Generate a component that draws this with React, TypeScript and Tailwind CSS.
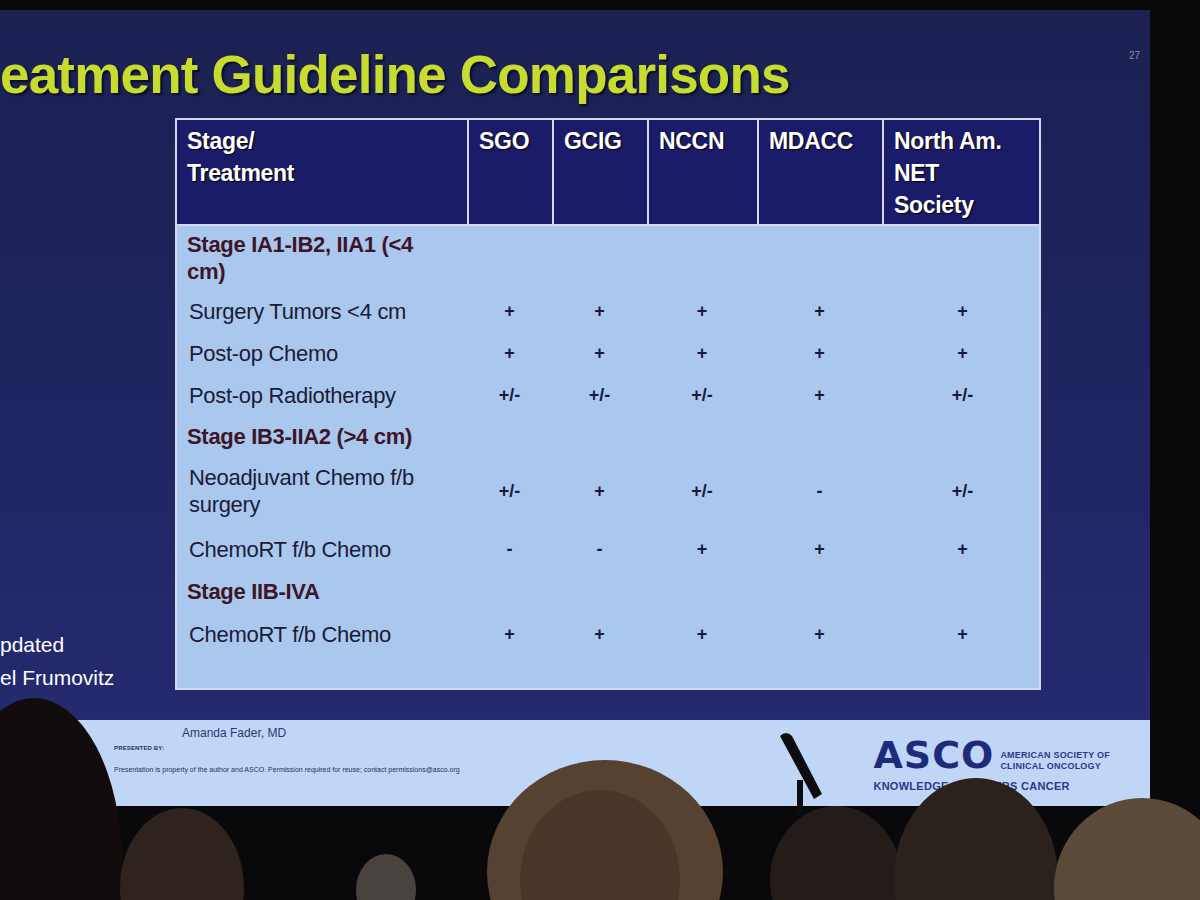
import React from "react";

type Row = {
  kind: "stage" | "item";
  label: React.ReactNode;
  vals?: string[];
  h: string;
};

const rows: Row[] = [
  { kind: "stage", label: <>Stage IA1-IB2, IIA1 (&lt;4<br />cm)</>, h: "h-[64px]" },
  { kind: "item", label: "Surgery Tumors <4 cm", vals: ["+", "+", "+", "+", "+"], h: "h-[42px]" },
  { kind: "item", label: "Post-op Chemo", vals: ["+", "+", "+", "+", "+"], h: "h-[42px]" },
  { kind: "item", label: "Post-op Radiotherapy", vals: ["+/-", "+/-", "+/-", "+", "+/-"], h: "h-[42px]" },
  { kind: "stage", label: "Stage IB3-IIA2 (>4 cm)", h: "h-[40px]" },
  { kind: "item", label: <>Neoadjuvant Chemo f/b<br />surgery</>, vals: ["+/-", "+", "+/-", "-", "+/-"], h: "h-[70px]" },
  { kind: "item", label: "ChemoRT f/b Chemo", vals: ["-", "-", "+", "+", "+"], h: "h-[46px]" },
  { kind: "stage", label: "Stage IIB-IVA", h: "h-[38px]" },
  { kind: "item", label: "ChemoRT f/b Chemo", vals: ["+", "+", "+", "+", "+"], h: "h-[48px]" },
];

const cols = "grid grid-cols-[290px_85px_95px_110px_125px_161px]";

export default function App() {
  return (
    <div className="relative w-[1200px] h-[900px] overflow-hidden bg-[#09080a] font-['Liberation_Sans',Arial,sans-serif]">
      {/* Slide */}
      <div className="mt-[10px] w-[1150px] h-[796px] flex flex-col overflow-hidden bg-gradient-to-b from-[#1c2152] via-[#1f2560] to-[#272c74]">
        {/* Title */}
        <div className="flex justify-between items-start">
          <h1 className="mt-[35px] text-[53px] leading-[60px] font-bold text-[#c7dc2f] tracking-[-0.8px] [text-shadow:2px_2px_2px_#0a0c2a] whitespace-nowrap">
            eatment Guideline Comparisons
          </h1>
          <span className="mt-[38px] mr-[10px] text-[10px] text-[#8a8fb0]">27</span>
        </div>

        {/* Main */}
        <div className="flex mt-[13px]">
          <div className="w-[175px] -mb-[4px] flex flex-col justify-end text-white text-[21px] leading-[33px]">
            <span className="whitespace-nowrap">pdated</span>
            <span className="whitespace-nowrap">el Frumovitz</span>
          </div>

          <div className="w-[866px] border-2 border-[#d4d8f0] bg-[#aac7ee]">
            {/* Header */}
            <div className={`${cols} bg-[#1b1c69] text-white font-bold text-[23px] leading-[32px] tracking-[-0.3px] [text-shadow:1px_1px_1px_#000] border-b-2 border-[#d4d8f0]`}>
              <div className="h-[104px] px-[10px] pt-[5px]">Stage/<br />Treatment</div>
              <div className="px-[10px] pt-[5px] border-l-2 border-[#d4d8f0]">SGO</div>
              <div className="px-[10px] pt-[5px] border-l-2 border-[#d4d8f0]">GCIG</div>
              <div className="px-[10px] pt-[5px] border-l-2 border-[#d4d8f0]">NCCN</div>
              <div className="px-[10px] pt-[5px] border-l-2 border-[#d4d8f0]">MDACC</div>
              <div className="px-[10px] pt-[5px] border-l-2 border-[#d4d8f0]">North Am.<br />NET<br />Society</div>
            </div>

            {/* Body */}
            <div className="pb-[30px]">
              {rows.map((r, i) => (
                <div key={i} className={`${cols} ${r.h} items-center`}>
                  {r.kind === "stage" ? (
                    <div className="pl-[10px] text-[22px] leading-[27px] font-bold tracking-[-0.3px] text-[#3d1627]">
                      {r.label}
                    </div>
                  ) : (
                    <div className="pl-[12px] text-[22px] leading-[27px] tracking-[-0.3px] text-[#1a1c38]">
                      {r.label}
                    </div>
                  )}
                  {r.vals?.map((v, j) => (
                    <div key={j} className="text-center text-[18px] font-bold text-[#161a3e]">
                      {v}
                    </div>
                  ))}
                </div>
              ))}
            </div>
          </div>
        </div>

        {/* Footer strip */}
        <div className="mt-auto h-[86px] bg-[#bfd6f6] flex items-stretch">
          <div className="w-[100px] flex items-start pt-[10px] pl-[66px]">
            <div className="w-[20px] h-[24px] bg-[#2f8c5c]" />
          </div>
          <div className="flex flex-col pt-[4px]">
            <span className="ml-[82px] text-[12px] text-[#2b3870]">Amanda Fader, MD</span>
            <span className="ml-[14px] mt-[2px] text-[6px] font-bold text-[#26305e] tracking-wide">PRESENTED BY:</span>
            <span className="ml-[14px] mt-[12px] text-[7px] text-[#26305e] whitespace-nowrap">
              Presentation is property of the author and ASCO. Permission required for reuse; contact permissions@asco.org
            </span>
          </div>
          <div className="ml-auto mr-[40px] flex flex-col pt-[18px]">
            <div className="flex items-end gap-[6px]">
              <span className="text-[38px] leading-[34px] font-bold text-[#1f2a7a] tracking-[1px] font-['DejaVu_Sans',sans-serif]">ASCO</span>
              <span className="flex flex-col text-[9px] leading-[11px] font-bold text-[#2a3a88] tracking-wide">
                <span>AMERICAN SOCIETY OF</span>
                <span>CLINICAL ONCOLOGY</span>
              </span>
            </div>
            <span className="mt-[6px] text-[11px] font-bold text-[#2a3a88] tracking-wide">KNOWLEDGE CONQUERS CANCER</span>
          </div>
        </div>
      </div>

      {/* Audience silhouettes over the screen */}
      <svg className="absolute inset-0 pointer-events-none" width="1200" height="900" viewBox="0 0 1200 900">
        <path d="M780 736 q6 -6 12 0 l30 58 l-8 5 z" fill="#0c0c10" />
        <rect x="797" y="780" width="6" height="36" fill="#0c0c10" />
        <ellipse cx="34" cy="864" rx="88" ry="166" fill="#120d0c" />
        <ellipse cx="182" cy="888" rx="62" ry="80" fill="#2f241d" />
        <ellipse cx="386" cy="890" rx="30" ry="36" fill="#49433f" />
        <ellipse cx="605" cy="872" rx="118" ry="112" fill="#574130" />
        <ellipse cx="600" cy="880" rx="80" ry="90" fill="#4a3628" />
        <ellipse cx="836" cy="880" rx="66" ry="74" fill="#241c18" />
        <ellipse cx="976" cy="878" rx="82" ry="100" fill="#2b221d" />
        <ellipse cx="1142" cy="888" rx="88" ry="90" fill="#5c4a3a" />
      </svg>
    </div>
  );
}
